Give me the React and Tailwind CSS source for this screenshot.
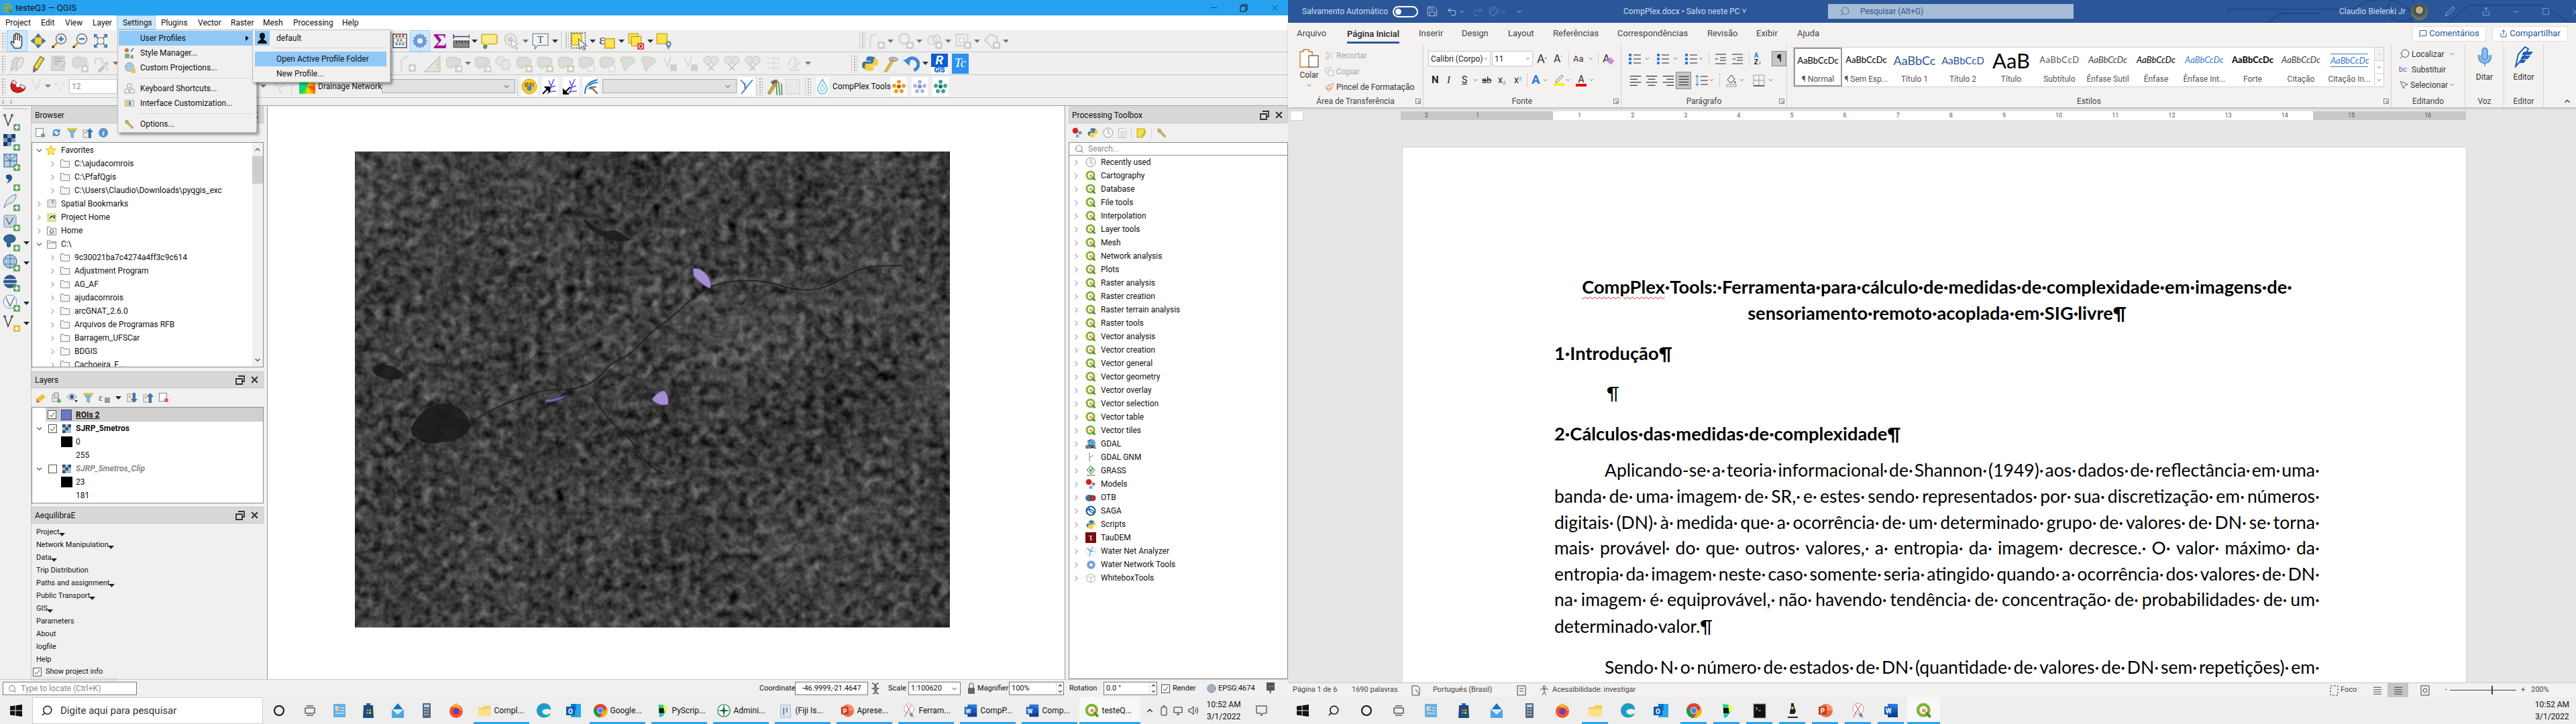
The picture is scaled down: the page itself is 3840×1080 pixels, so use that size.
import { Search, Scissors, Copy, Paintbrush, Mic, MessageSquare, Share, ChevronDown, ChevronRight, ChevronUp, Undo2, Redo2, Save, Palette, Minus, Square, X, MousePointer2, Pen } from "lucide-react";

const Caret = ({ c = "#333" }) => (
  <svg width="9" height="5" viewBox="0 0 9 5" className="shrink-0"><path d="M0 0h9L4.5 5z" fill={c} /></svg>
);

const Handle = () => (
  <div className="w-[6px] h-[26px] mx-[2px] shrink-0 bg-[radial-gradient(#a8a8a8_1px,transparent_1.2px)] bg-[length:4px_4px]" />
);

const Sep = () => <div className="w-px h-[28px] bg-[#cfcfcf] shrink-0" />;

const Slot = ({ c = "w-[31px]", children }) => (
  <div className={c + " h-full flex items-center justify-center shrink-0"}>{children}</div>
);

const I = ({ s = 24, children }) => (
  <svg width={s} height={s} viewBox="0 0 24 24" className="shrink-0">{children}</svg>
);

// ---------- qgis toolbar icons
const Hand = () => (
  <I s={26}><path d="M8 22c-2-3-5-6-5-8s2-1 4 1V5c0-2 2-2 2 0v6V3c0-2 3-2 3 0v8V4c0-2 3-2 3 0v8V7c0-2 3-2 3 0v9c0 3-1 4-2 6z" fill="#fff" stroke="#222" strokeWidth="1.2" /></I>
);
const PanSel = () => (
  <I>
    <rect x="7" y="7" width="10" height="10" fill="#f5d33f" stroke="#a98c10" />
    <path d="M12 1l4 5H8zM12 23l4-5H8zM1 12l5-4v8zM23 12l-5-4v8z" fill="#3a78b5" stroke="#1f4a7a" strokeWidth=".5" />
  </I>
);
const Zoom = ({ minus }) => (
  <I>
    <circle cx="15" cy="9" r="7.5" fill="#eef3f8" stroke="#777" strokeWidth="1.5" />
    <path d="M11 9h8" stroke="#3a78b5" strokeWidth="2.4" />
    {!minus && <path d="M15 5v8" stroke="#3a78b5" strokeWidth="2.4" />}
    <path d="M9.500 14.500L2 22" stroke="#d3a21b" strokeWidth="3" />
    <path d="M2 22l2-2" stroke="#222" strokeWidth="3" />
  </I>
);
const ZoomFull = () => (
  <I>
    <path d="M2 2h6L2 8zM22 2h-6l6 6zM2 22v-6l6 6zM22 22h-6l6-6z" fill="#3a78b5" />
    <path d="M5 5l14 14M19 5L5 19" stroke="#3a78b5" strokeWidth="2" />
    <circle cx="12" cy="12" r="5" fill="#eef3f8" stroke="#777" />
  </I>
);
const Abacus = () => (
  <I>
    <rect x="2" y="2" width="20" height="20" fill="#fff" stroke="#444" strokeWidth="1.4" />
    <path d="M2 8h20M2 14h20" stroke="#888" />
    <circle cx="7" cy="5" r="1.800" fill="#c23b3b" /><circle cx="12" cy="5" r="1.800" fill="#c23b3b" /><circle cx="17" cy="5" r="1.800" fill="#c23b3b" />
    <circle cx="9" cy="11" r="1.800" fill="#58a45c" /><circle cx="14" cy="11" r="1.800" fill="#58a45c" />
    <circle cx="7" cy="17" r="1.800" fill="#4c7fc0" /><circle cx="12" cy="17" r="1.800" fill="#4c7fc0" /><circle cx="17" cy="17" r="1.800" fill="#4c7fc0" />
  </I>
);
const Gear = ({ c = "#6f9bd8", s = 24 }) => (
  <I s={s}>
    <path d="M12 1l2 3 3-1.500.8 3.500 3.500.7L20 10l3 2-3 2 1.300 3.300-3.500.7L17 21.500 14 20l-2 3-2-3-3 1.500-.8-3.500-3.500-.7L4 14l-3-2 3-2-1.300-3.300 3.500-.7L7 2.500 10 4z" fill={c} stroke="#4a74ad" strokeWidth=".5" />
    <circle cx="12" cy="12" r="4" fill="#eaf1fb" />
  </I>
);
const Ruler = () => (
  <I s={26}>
    <path d="M2 6h22M2 3v6M24 3v6" stroke="#2d4a6c" strokeWidth="1.5" />
    <rect x="2" y="12" width="22" height="9" fill="#8a8a8a" stroke="#444" />
    <path d="M6 12v4M10 12v3M14 12v4M18 12v3M22 12v4" stroke="#222" />
  </I>
);
const CalloutIco = () => (
  <I s={25}>
    <path d="M3 2h18c2 0 2 1 2 3v8c0 2-1 3-3 3H10l-3 4-1-4H3c-2 0-2-1-2-3V5c0-2 0-3 2-3z" fill="#fbeb8e" stroke="#c7a21a" strokeWidth="1.3" />
    <circle cx="6" cy="20" r="3" fill="#5d8f5d" />
  </I>
);
const GearPointer = () => (
  <I s={26}>
    <circle cx="11" cy="10" r="8" fill="#e8e8e8" stroke="#c8c8c8" strokeWidth="2" strokeDasharray="3 1.500" />
    <circle cx="11" cy="10" r="3.500" fill="#cfcfcf" />
    <path d="M12 11l10 5-4 1.500 3 5-2 1-3-5-3 3z" fill="#f4f4f4" stroke="#b5b5b5" />
  </I>
);
const TCall = () => (
  <I s={26}>
    <path d="M2 2h21v16H9l-4 5v-5H2z" fill="#eef3f5" stroke="#6a7a84" />
    <text x="12.500" y="14.500" textAnchor="middle" fontSize="13" fontFamily="Liberation Serif, serif" fill="#444">T</text>
  </I>
);
const SelectY = () => (
  <I s={27}>
    <rect x="1" y="1" width="19" height="20" fill="none" stroke="#444" strokeDasharray="2 1.500" />
    <rect x="2" y="2" width="13" height="15" fill="#fde54b" stroke="#b99a12" />
    <path d="M11 9l11 9-5 .5 3 5-2 1-3-5-3 3z" fill="#eee" stroke="#666" />
  </I>
);
const Eps = () => (
  <I s={26}>
    <rect x="9" y="9" width="13" height="13" fill="#fde54b" stroke="#b99a12" strokeWidth="1.2" />
    <text x="1" y="17" fontSize="20" fontFamily="Liberation Serif, serif" fill="#6b3a83">ε</text>
  </I>
);
const StackY = () => (
  <I s={26}>
    <rect x="2" y="2" width="13" height="13" fill="#fde54b" stroke="#b99a12" />
    <rect x="6" y="6" width="13" height="13" fill="#fde54b" stroke="#b99a12" />
    <rect x="14" y="15" width="9" height="9" rx="1" fill="#dc2b2b" />
    <circle cx="18.500" cy="19.500" r="2.600" fill="none" stroke="#fff" />
  </I>
);
const PinY = () => (
  <I s={26}>
    <rect x="2" y="2" width="14" height="14" fill="#fde54b" stroke="#b99a12" />
    <path d="M18 24c-3-5-4-6-4-8a4 4 0 018 0c0 2-1 3-4 8z" fill="#7791a8" />
    <circle cx="18" cy="16" r="1.500" fill="#fff" />
  </I>
);
const Badge = ({ x = 14, y = 14, c = "#d2cfc2", g = "#fff" }) => (
  <>
    <rect x={x} y={y} width="10" height="10" rx="1" fill={c} />
    <circle cx={x + 5} cy={y + 5} r="2.500" fill={g} />
  </>
);
const GreyA = () => (
  <I s={26}><path d="M3 22V10c0-5 4-7 8-7" fill="none" stroke="#cfcfcf" strokeWidth="1.500" /><rect x="9" y="1" width="3" height="3" fill="#ddd" /><rect x="2" y="19" width="3" height="3" fill="#ddd" /><Badge x={13} y={13} /></I>
);
const GreyB = () => (
  <I s={26}><circle cx="10" cy="9" r="7" fill="none" stroke="#cfcfcf" strokeWidth="2" /><Badge x={13} y={13} /></I>
);
const GreyC = () => (
  <I s={26}><circle cx="9" cy="11" r="6" fill="#ececec" stroke="#cfcfcf" strokeWidth="1.500" /><circle cx="15" cy="9" r="5" fill="none" stroke="#cfcfcf" strokeWidth="1.500" /><Badge x={13} y={13} /></I>
);
const GreyD = () => (
  <I s={26}><rect x="2" y="3" width="16" height="16" fill="#ececec" stroke="#cfcfcf" strokeWidth="1.500" /><rect x="7" y="8" width="6" height="6" fill="#f4f4f4" stroke="#cfcfcf" /><Badge x={13} y={13} /></I>
);
const GreyE = () => (
  <I s={26}><path d="M2 11l7-8 9 3 1 9-8 5z" fill="none" stroke="#cfcfcf" strokeWidth="2" /><Badge x={13} y={13} /></I>
);
const Blob = ({ b = "#d2cfc2", k = "d" }) => (
  <I s={26}>
    <path d="M2 9c0-5 4-7 10-6 6 0 10 1 10 6 0 5-5 5-8 6-2 1-3 4-7 3-4-1-5-5-5-9z" fill="#dcdcd6" stroke="#c9c9c2" />
    {k === "d" && <Badge x={14} y={14} c={b} />}
    {k === "x" && <><rect x="14" y="14" width="10" height="10" rx="1" fill="#e3e0dc" /><path d="M16.500 16.500l5 5m0-5l-5 5" stroke="#fff" strokeWidth="1.600" /></>}
    {k === "a" && <><rect x="14" y="14" width="10" height="10" rx="1" fill="#cfcfcf" /><path d="M16 19h6M19 16l3 3-3 3" stroke="#fff" strokeWidth="1.500" fill="none" /></>}
  </I>
);
const GreyPencil = () => (
  <I s={26}><path d="M3 22L5 8l5-5 4 2-1 10z" fill="#d8d8d8" stroke="#bcbcbc" /><path d="M10 22L12 8l5-5 4 2-3 10z" fill="#e6e6e6" stroke="#bcbcbc" /></I>
);
const YPencil = () => (
  <I s={26}><path d="M5 24l1-8L15 2l5 3-9 15z" fill="#f4d33b" stroke="#555" /><path d="M5 24l1-8 5 4z" fill="#777" /></I>
);
const SaveGrey = () => (
  <I s={25}><rect x="2" y="2" width="18" height="20" fill="#dadada" stroke="#bbb" /><path d="M5 5h12M5 9h12M5 13h7" stroke="#aaa" strokeWidth="1.500" /><path d="M13 22l2-6 6-6 2 2-6 6z" fill="#c8c8c8" /></I>
);
const ToolsGrey = () => (
  <I s={26}><path d="M3 5h10M3 5v8M13 5v4" stroke="#cfcfcf" strokeWidth="1.500" fill="none" /><path d="M6 22l12-13 3 3-12 13z" fill="#c5c5c0" /><path d="M19 22L9 9l3-2 10 13z" fill="#ddd" /></I>
);
const TriRuler = () => (
  <I s={26}><path d="M22 2v21H1z" fill="#e7e3da" stroke="#bdb7a8" /><path d="M20 9h-3M20 13h-3M20 17h-3" stroke="#bdb7a8" /></I>
);
const Magnet = () => (
  <I s={27}>
    <path d="M6 4c-5 6-4 14 3 16s13-3 13-7l-6-3c0 3-3 5-5 4s-3-3-1-7z" fill="#d61f1f" stroke="#871010" />
    <path d="M6 4l4 3-1 3-5-2zM22 13l-6-3-1 3 5 3z" fill="#eee" stroke="#777" strokeWidth=".5" />
  </I>
);
const Python = ({ s = 24 }) => (
  <I s={s}>
    <path d="M12 2c-5 0-5 2-5 3v3h6v1H5C2 9 1 11 1 14c0 4 2 5 4 5h2v-3c0-2 2-4 4-4h5c2 0 3-1 3-3V5c0-2-2-3-7-3z" fill="#3a76ab" />
    <path d="M12 22c5 0 5-2 5-3v-3h-6v-1h8c3 0 4-2 4-5 0-4-2-5-4-5h-2v3c0 2-2 4-4 4H8c-2 0-3 1-3 3v4c0 2 2 3 7 3z" fill="#f7ce3e" />
  </I>
);
const Hammer = () => (
  <I s={26}>
    <path d="M3 24l12-19 3 2L6 25z" fill="#e8ba2c" stroke="#96781a" strokeWidth=".6" />
    <path d="M10 5c4-3 8-3 13 1l-3 3-7-2-1 2z" fill="#bbb" stroke="#666" strokeWidth=".6" />
    <path d="M3 24c5 1 12 0 20-1" stroke="#ddd" strokeWidth="1.500" fill="none" />
  </I>
);
const UndoBlue = () => (
  <I s={26}>
    <path d="M6 9a8.500 8.500 0 1110 12" fill="none" stroke="#3a88d8" strokeWidth="4.500" />
    <path d="M1 7l10-2-1 10z" fill="#3a88d8" />
  </I>
);
const RGis = () => (
  <div className="w-[25px] h-[30px] bg-[#fff] flex flex-col items-center overflow-hidden">
    <span className="w-full h-[20px] bg-[#0a5ecf] text-white text-[19px] leading-[20px] text-center font-bold italic">R</span>
    <span className="text-[#0a5ecf] text-[10px] leading-[10px] font-black">GIS</span>
  </div>
);
const Tc = () => (
  <div className="w-[25px] h-[30px] bg-[#2c92f0] text-white flex items-center justify-center text-[19px] italic [font-family:'Liberation_Serif',serif]">Tc</div>
);
const Plugin = ({ children }) => (
  <div className="w-[24px] h-[28px] bg-white flex items-center justify-center shrink-0">{children}</div>
);
const Barcode = () => (
  <I><circle cx="12" cy="12" r="11" fill="#fbc92c" stroke="#d19a12" /><path d="M6 6v7M8 6v7M10 6v7M13 6v7M15 6v7M18 6v7" stroke="#444" strokeWidth="1" /><circle cx="12" cy="15" r="3.500" fill="#3a88d8" /></I>
);
const Branch = ({ dir = "up" }) => (
  <I>
    <path d="M8 23c4-3 5-8 6-13l4-9M11 14l9-3M13 11L10 3M9 20l12-1" fill="none" stroke="#5a5ae0" strokeWidth="1.600" />
    {dir === "up" && <path d="M1 23l8-8M5 13h6v6z" stroke="#000" strokeWidth="2" fill="#000" />}
    {dir === "down" && <path d="M11 13l-8 8M1 17v6h6z" stroke="#000" strokeWidth="2" fill="#000" />}
  </I>
);
const RiverHammer = () => (
  <I><path d="M3 23C3 10 10 4 22 2M9 11c4-4 8-5 13-5M8 15c4-2 8-3 12-2" stroke="#2a7bb5" strokeWidth="2" fill="none" /><path d="M14 15l8 8M11 16l5-3" stroke="#9a7a55" strokeWidth="2.500" /></I>
);
const Tee = () => (
  <I><path d="M3 2l6 7 1 7-6 7M21 2l-6 7-5 7" stroke="#2a86cf" strokeWidth="1.800" fill="none" /><path d="M10 6v11" stroke="#d33" strokeDasharray="2 1" /></I>
);
const HammerGreen = () => (
  <I s={26}>
    <path d="M14 4c2 6 1 14 2 20M18 6c1 6 1 12 2 18M22 8c1 6 0 12 1 16" stroke="#4e8f4e" strokeWidth="1.500" fill="none" />
    <path d="M3 21L13 6l3 2L6 23z" fill="#cfb42a" stroke="#333" strokeWidth=".5" /><path d="M7 5l8-3 3 4-8 4z" fill="#7a6a5a" />
  </I>
);
const MapGrey = () => (
  <I s={26}><path d="M3 2h14l4 2v18H5l-2-2z" fill="#ececec" stroke="#cfcfcf" /><path d="M8 6v13M12 8l2 12M17 6v13" stroke="#d5d5d5" strokeDasharray="2 1" /></I>
);
const Drop = () => (
  <div className="w-[18px] h-[28px] bg-white flex items-center justify-center">
    <svg width="16" height="24" viewBox="0 0 16 24"><path d="M8 1c2 6 7 10 7 15a7 7 0 01-14 0C1 11 6 7 8 1z" fill="none" stroke="#5ab8e8" strokeWidth="1.400" /><path d="M8 8c1 3 3 5 3 8a3 3 0 01-6 0c0-3 2-5 3-8z" fill="none" stroke="#5ab8e8" /></svg>
  </div>
);
const Flower = ({ c, d }) => (
  <Plugin>
    <svg width="22" height="22" viewBox="0 0 22 22">
      <circle cx="11" cy="4" r="3" fill={c} /><circle cx="4" cy="10" r="3" fill={c} /><circle cx="18" cy="10" r="3" fill={c} /><circle cx="7" cy="18" r="3" fill={c} /><circle cx="15" cy="18" r="3" fill={c} /><circle cx="11" cy="11" r="3" fill={d} />
    </svg>
  </Plugin>
);
const Heat = () => (
  <div className="w-[24px] h-[22px] bg-[conic-gradient(from_45deg,#ffe600,#ff3d00,#ffe600,#19d84a,#00e0a8,#19d84a,#ffe600)]" />
);
const Combo = ({ c }) => (
  <div className={c + " h-[21px] bg-[#e1e1e1] border border-[#adadad] flex items-center justify-end pr-[6px] shrink-0"}>
    <ChevronDown size={12} color="#333" />
  </div>
);
const Q = ({ s = 16 }) => (
  <svg width={s} height={s} viewBox="0 0 16 16" className="shrink-0">
    <circle cx="7.500" cy="7.500" r="5.500" fill="none" stroke="#83b23c" strokeWidth="3" />
    <path d="M10 10l4.500 4.500" stroke="#5c8a2a" strokeWidth="2.600" />
    <circle cx="8" cy="8" r="2" fill="#f29a38" />
  </svg>
);

const Panel = ({ title }) => (
  <div className="h-[25px] bg-[#d8d8d8] border border-[#c4c4c4] flex items-center pl-[4px] pr-[5px] text-[12px] shrink-0">
    <span className="flex-1">{title}</span>
    <svg width="14" height="14" viewBox="0 0 14 14" className="mr-[7px]"><path d="M4 1h9v8h-3M1 5h9v8H1z" fill="none" stroke="#333" strokeWidth="1.800" /></svg>
    <X size={15} strokeWidth={3.4} color="#333" />
  </div>
);

const FolderIco = () => (
  <svg width="14" height="12" viewBox="0 0 14 12" className="shrink-0"><path d="M.5 11.500V.5h4l1 2h8v9z" fill="#f6f6f6" stroke="#8a8a8a" /></svg>
);

const leftIcons = [
  <path key="a" d="M3 3l5 15 6-15" fill="none" stroke="#333" strokeWidth="1.300" />,
  <g key="b"><rect x="1" y="1" width="6" height="6" fill="#243a58" /><rect x="7" y="1" width="6" height="6" fill="#6fa0d0" /><rect x="13" y="1" width="6" height="6" fill="#243a58" /><rect x="1" y="7" width="6" height="6" fill="#6fa0d0" /><rect x="7" y="7" width="6" height="6" fill="#243a58" /><rect x="13" y="7" width="6" height="6" fill="#6fa0d0" /><rect x="1" y="13" width="6" height="6" fill="#243a58" /><rect x="7" y="13" width="6" height="6" fill="#6fa0d0" /></g>,
  <g key="c"><rect x="2" y="1" width="19" height="19" fill="#b7d1ea" stroke="#2e5d8c" /><path d="M2 11h19M11 1v19M2 1l9 10M21 1l-10 10" stroke="#2e5d8c" /></g>,
  <path key="d" d="M6 2c5-2 9 1 8 5-1 4-5 6-8 8 1-3 3-4 3-6-3 1-6-6-3-7z" fill="#1e5a8a" />,
  <path key="e" d="M2 21C4 10 10 3 20 1c0 8-5 13-12 14z" fill="#dfe7ee" stroke="#587a99" />,
  <g key="f"><rect x="2" y="2" width="18" height="18" rx="2" fill="#c7d5e2" stroke="#8098ad" /><path d="M5 5l5 11 6-11" fill="none" stroke="#333" /></g>,
  <path key="g" d="M3 4c4-4 12-4 15 0 3 5-2 10-6 8l-1 7h-4l-1-7C3 12 0 8 3 4z" fill="#33689a" stroke="#1a3f66" />,
  <g key="h"><circle cx="11" cy="11" r="10" fill="#aac6e2" stroke="#2e5d8c" /><path d="M3 7h16M3 15h16M11 1v20" stroke="#2e5d8c" strokeDasharray="2 1" /></g>,
  <g key="i"><circle cx="11" cy="11" r="10" fill="#2e5d8c" /><path d="M1 8h20M1 14h20" stroke="#dfe8f2" strokeWidth="1.500" /></g>,
  <g key="j"><circle cx="11" cy="11" r="10" fill="#eef4fa" stroke="#6f93ba" /><path d="M5 5l6 13 6-13" fill="none" stroke="#333" /></g>,
  <path key="k" d="M3 3l5 15 6-15" fill="none" stroke="#333" strokeWidth="1.300" />,
];

const LeftStrip = () => (
  <div className="w-[47px] shrink-0 flex flex-col items-start pl-[4px] pt-[2px] border-r border-[#c8c8c8] h-full">
    <div className="w-[38px] h-[4px] bg-[radial-gradient(#b0b0b0_1px,transparent_1.2px)] bg-[length:4px_4px] mb-[3px]" />
    {leftIcons.map((ic, n) => (
      <div key={n} className="h-[30px] flex items-center gap-[5px] shrink-0">
        <svg width="26" height="26" viewBox="0 0 26 26" className="shrink-0">
          {ic}
          {n === 0 || n === 10 ? <><circle cx="3" cy="3" r="1.500" fill="none" stroke="#333" /><circle cx="14" cy="3" r="1.500" fill="none" stroke="#333" /></> : null}
          <rect x="16" y="16" width="10" height="10" rx="1.500" fill={n === 10 ? "#e0c040" : "#69a96b"} />
          {n === 10 ? <circle cx="21" cy="21" r="2.500" fill="#fff" /> : <path d="M18 21h6M21 18v6" stroke="#fff" strokeWidth="2" />}
        </svg>
        {[6, 7, 9, 10].includes(n) && <Caret c="#222" />}
      </div>
    ))}
  </div>
);

const browserRows = [
  [0, "Favorites", "star", true],
  [1, "C:\\ajudacomrois"],
  [1, "C:\\PfafQgis"],
  [1, "C:\\Users\\Claudio\\Downloads\\pyqgis_exc"],
  [0, "Spatial Bookmarks", "book"],
  [0, "Project Home", "home2"],
  [0, "Home", "home"],
  [0, "C:\\", "drive", true],
  [1, "9c30021ba7c4274a4ff3c9c614"],
  [1, "Adjustment Program"],
  [1, "AG_AF"],
  [1, "ajudacomrois"],
  [1, "arcGNAT_2.6.0"],
  [1, "Arquivos de Programas RFB"],
  [1, "Barragem_UFSCar"],
  [1, "BDGIS"],
  [1, "Cachoeira_E..."],
];

const TopIco = ({ k }) => {
  if (k === "star") return <svg width="16" height="16" viewBox="0 0 24 24" className="shrink-0"><path d="M12 1l3.500 7.500 8 1-6 5.500 1.600 8L12 19l-7.100 4 1.600-8-6-5.500 8-1z" fill="#fde54b" stroke="#c9a514" /></svg>;
  if (k === "book") return <svg width="14" height="14" viewBox="0 0 14 14" className="shrink-0"><path d="M1 1h12v11H1z" fill="#e5e5e5" stroke="#a0a0a0" /><path d="M7 1h3v6L8.500 6 7 7z" fill="#8ea7c4" /></svg>;
  if (k === "home2") return <svg width="14" height="13" viewBox="0 0 14 13" className="shrink-0"><rect width="14" height="13" fill="#d4e39a" /><path d="M0 9l8-7 6 1M7 11l2-8" stroke="#f6f6c8" strokeWidth="1.500" /><path d="M10 3l3 3-2 2-3-2z" fill="#1f9a35" /></svg>;
  if (k === "home") return <svg width="14" height="13" viewBox="0 0 14 13" className="shrink-0"><path d="M.5 12.500V.5h4l1 2h8v10z" fill="#f8f8f8" stroke="#8a8a8a" /><path d="M7 4l3 3H9v3H5V7H4z" fill="none" stroke="#444" /></svg>;
  if (k === "drive") return <svg width="14" height="13" viewBox="0 0 14 13" className="shrink-0"><path d="M.5 12.500V.5h4l1 2h8v10zM.5 4.500h13" fill="#f8f8f8" stroke="#8a8a8a" /></svg>;
  return <FolderIco />;
};

const Browser = () => (
  <div className="h-[389px] flex flex-col shrink-0">
    <Panel title="Browser" />
    <div className="h-[28px] flex items-center gap-[8px] pl-[6px] shrink-0">
      <svg width="15" height="15" viewBox="0 0 15 15"><rect x=".5" y=".5" width="11" height="12" fill="#fff" stroke="#888" /><circle cx="11" cy="11" r="3" fill="#69a96b" /></svg>
      <svg width="16" height="16" viewBox="0 0 24 24"><path d="M4 12a8 8 0 0113-6l3-3v8h-8l3-3a5 5 0 00-8 4zM20 12a8 8 0 01-13 6l-3 3v-8h8l-3 3a5 5 0 008-4z" fill="#3f86cb" /></svg>
      <svg width="15" height="15" viewBox="0 0 15 15"><path d="M0 1h15L9.500 8v7l-4-2V8z" fill="#7eb6d8" stroke="#5c8aa8" strokeWidth=".5" /><rect width="15" height="3" fill="#e8c73a" /></svg>
      <svg width="16" height="15" viewBox="0 0 16 15"><rect x="1" y="3" width="8" height="11" fill="#eee" stroke="#999" /><rect x="3" y="6" width="3" height="2" fill="#e29b35" /><path d="M11 0l5 6h-3v9H9V6H6z" fill="#3a78b5" /></svg>
      <svg width="14" height="14" viewBox="0 0 14 14"><circle cx="7" cy="7" r="7" fill="#5b93cc" /><text x="7" y="11" textAnchor="middle" fontSize="11" fontStyle="italic" fontWeight="bold" fill="#fff" fontFamily="Liberation Serif, serif">i</text></svg>
    </div>
    <div className="flex-1 bg-white border border-[#8c8c8c] flex overflow-hidden">
      <div className="flex-1 pt-[1px] overflow-hidden">
        {browserRows.map(([lvl, t, ic, open]) => (
          <div key={t} className={"h-[20px] flex items-center text-[12px] whitespace-nowrap shrink-0 " + (lvl ? "pl-[24px]" : "pl-[4px]")}>
            {open ? <ChevronDown size={13} strokeWidth={2.4} color="#555" className="shrink-0" /> : <ChevronRight size={13} strokeWidth={2.4} color="#b0b0b0" className="shrink-0" />}
            <span className="w-[19px] flex justify-end mr-[7px] shrink-0"><TopIco k={ic} /></span>
            <span>{t}</span>
          </div>
        ))}
      </div>
      <div className="w-[16px] bg-[#f0f0f0] flex flex-col items-center shrink-0">
        <ChevronUp size={12} strokeWidth={2.4} color="#555" className="my-[4px]" />
        <div className="w-full h-[41px] bg-[#cdcdcd]" />
        <div className="flex-1" />
        <ChevronDown size={12} strokeWidth={2.4} color="#555" className="my-[4px]" />
      </div>
    </div>
  </div>
);

const RasterIco = () => (
  <svg width="13" height="13" viewBox="0 0 3 3" className="shrink-0"><rect width="3" height="3" fill="#9cc0de" /><rect width="1" height="1" fill="#2c4a6e" /><rect x="2" width="1" height="1" fill="#2c4a6e" /><rect x="1" y="1" width="1" height="1" fill="#2c4a6e" /><rect y="2" width="1" height="1" fill="#2c4a6e" /></svg>
);
const Chk = ({ on, c = "" }) => (
  <div className={"w-[13px] h-[13px] bg-white border border-[#555] flex items-center justify-center shrink-0 " + c}>
    {on && <svg width="11" height="11" viewBox="0 0 11 11"><path d="M2 6l2.500 2.500L9 2.500" fill="none" stroke="#333" /></svg>}
  </div>
);

const LegendItem = ({ t, black }) => (
  <div className="h-[20px] flex items-center text-[12px] pl-[43px] shrink-0">
    <div className={"w-[17px] h-[16px] mr-[5px] " + (black ? "bg-black" : "")} />
    {t}
  </div>
);

const Layers = () => (
  <div className="h-[197px] mt-[6px] flex flex-col shrink-0">
    <Panel title="Layers" />
    <div className="h-[28px] flex items-center gap-[8px] pl-[6px] shrink-0">
      <svg width="16" height="15" viewBox="0 0 16 15"><path d="M1 9l9-7 5 4-9 8z" fill="#f0c23a" /><path d="M1 9l5 5-4 1z" fill="#d8513a" /></svg>
      <svg width="14" height="16" viewBox="0 0 14 16"><rect x="1" y="4" width="9" height="10" fill="#eee" stroke="#888" /><rect x="4" y="1" width="6" height="8" fill="#ddd" stroke="#888" /><circle cx="11" cy="13" r="3" fill="#69a96b" /></svg>
      <svg width="17" height="14" viewBox="0 0 17 14"><path d="M1 6c4-6 10-6 14 0-4 6-10 6-14 0z" fill="#dfe6ec" stroke="#888" /><circle cx="8" cy="6" r="3" fill="#3a5f85" /><path d="M12 11h5l-2.500 3z" fill="#222" /></svg>
      <svg width="15" height="15" viewBox="0 0 15 15"><path d="M0 1h15L9.500 8v7l-4-2V8z" fill="#7eb6d8" stroke="#5c8aa8" strokeWidth=".5" /><rect width="15" height="3" fill="#e8c73a" /></svg>
      <span className="text-[#6b3a83] text-[15px] leading-none [font-family:'Liberation_Serif',serif]">ε</span>
      <div className="-ml-[5px] w-[8px] h-[8px] bg-[#999] mt-[8px]" />
      <Caret c="#222" />
      <svg width="16" height="15" viewBox="0 0 16 15"><rect x="1" y="2" width="8" height="11" fill="#eee" stroke="#999" /><rect x="3" y="5" width="3" height="2" fill="#e29b35" /><path d="M11 15l5-6h-3V0H9v9H6z" fill="#3a78b5" /></svg>
      <svg width="16" height="15" viewBox="0 0 16 15"><rect x="1" y="3" width="8" height="11" fill="#eee" stroke="#999" /><rect x="3" y="6" width="3" height="2" fill="#e29b35" /><path d="M11 0l5 6h-3v9H9V6H6z" fill="#3a78b5" /></svg>
      <svg width="15" height="15" viewBox="0 0 15 15"><rect x=".5" y=".5" width="11" height="12" fill="#fff" stroke="#888" /><circle cx="11" cy="11" r="3" fill="#e06060" /></svg>
    </div>
    <div className="flex-1 bg-white border border-[#8c8c8c] overflow-hidden">
      <div className="h-[21px] ml-[20px] bg-[#d0d0d0] flex items-center pl-[3px] text-[12px] font-bold underline">
        <Chk on c="mr-[7px]" />
        <span className="w-[16px] h-[16px] bg-[#6a78c0] border border-[#3a4688] mr-[6px]" />
        ROIs 2
      </div>
      <div className="h-[20px] flex items-center text-[12px] font-bold pl-[4px]">
        <ChevronDown size={13} strokeWidth={2.4} color="#555" className="mr-[7px]" />
        <Chk on c="mr-[8px]" />
        <RasterIco />
        <span className="ml-[7px]">SJRP_5metros</span>
      </div>
      <LegendItem t="0" black />
      <LegendItem t="255" />
      <div className="h-[20px] flex items-center text-[12px] italic font-bold text-[#8a8a8a] pl-[4px]">
        <ChevronDown size={13} strokeWidth={2.4} color="#555" className="mr-[7px]" />
        <Chk c="mr-[8px]" />
        <RasterIco />
        <span className="ml-[7px]">SJRP_5metros_Clip</span>
      </div>
      <LegendItem t="23" black />
      <LegendItem t="181" />
    </div>
  </div>
);

const aequi = [
  ["Project", 1], ["Network Manipulation", 1], ["Data", 1], ["Trip Distribution"], ["Paths and assignment", 1],
  ["Public Transport", 1], ["GIS", 1], ["Parameters"], ["About"], ["logfile"], ["Help"],
];

const Aequilibrae = () => (
  <div className="flex-1 mt-[5px] flex flex-col">
    <Panel title="AequilibraE" />
    <div className="pl-[7px] pt-[4px]">
      {aequi.map(([t, m]) => (
        <div key={t} className="h-[19px] flex items-center text-[11px] text-[#111]">
          {t}
          {m && <span className="mt-[5px] -ml-[1px]"><Caret c="#222" /></span>}
        </div>
      ))}
    </div>
    <div className="pl-[2px] flex items-center text-[11px] h-[16px] gap-[6px]">
      <Chk on />
      Show project info
    </div>
    <div className="ml-[2px] mt-[1px] w-[125px] h-[4px] bg-[#f8f8f8] border border-[#d4d4d4]" />
  </div>
);

const toolbox = [
  "Cartography", "Database", "File tools", "Interpolation", "Layer tools", "Mesh", "Network analysis", "Plots", "Raster analysis",
  "Raster creation", "Raster terrain analysis", "Raster tools", "Vector analysis", "Vector creation", "Vector general", "Vector geometry",
  "Vector overlay", "Vector selection", "Vector table", "Vector tiles",
];

const TreeRow = ({ icon, t }) => (
  <div className="h-[20px] flex items-center text-[12px] pl-[4px] shrink-0">
    <ChevronRight size={13} strokeWidth={2.4} color="#b0b0b0" className="shrink-0" />
    <span className="w-[16px] ml-[7px] mr-[7px] flex justify-center shrink-0">{icon}</span>
    {t}
  </div>
);

const Clock = ({ s = 16 }) => (
  <svg width={s} height={s} viewBox="0 0 16 16" className="shrink-0"><circle cx="8" cy="8" r="7" fill="#f7f7f7" stroke="#9a9a9a" /><path d="M8 3v5l3 3" stroke="#888" fill="none" /></svg>
);
const Models = () => (
  <svg width="16" height="16" viewBox="0 0 16 16" className="shrink-0"><circle cx="5" cy="5" r="4" fill="#d02020" stroke="#d02020" strokeDasharray="1.500 1" /><circle cx="12" cy="8" r="2.500" fill="#8a8a8a" /><circle cx="8" cy="13" r="2.500" fill="#8aa8d8" /></svg>
);

const Toolbox = () => (
  <div className="flex-1 flex flex-col min-w-0 mt-[1px]">
    <Panel title="Processing Toolbox" />
    <div className="h-[28px] flex items-center pl-[5px] gap-[7px] shrink-0">
      <Models />
      <Python s={16} />
      <Clock />
      <svg width="12" height="15" viewBox="0 0 12 15"><path d="M.5.5h8l3 3v11H.5z" fill="#f4f4f4" stroke="#bbb" /><path d="M3 6h6M3 9h6M3 12h6" stroke="#bbb" /></svg>
      <div className="w-px h-[16px] bg-[#cfcfcf]" />
      <svg width="15" height="15" viewBox="0 0 15 15"><path d="M1 1h12v8l-4 5H1z" fill="#f1df47" stroke="#c2aa1e" /><path d="M14 4L8 13" stroke="#777" /></svg>
      <div className="w-px h-[16px] bg-[#cfcfcf]" />
      <svg width="16" height="16" viewBox="0 0 16 16"><path d="M2 2l4 1 1 3 7 7-2 2-7-7-3-1z" fill="#d3b143" stroke="#777" strokeWidth=".5" /></svg>
    </div>
    <div className="h-[20px] bg-white border border-[#8c8c8c] flex items-center pl-[8px] gap-[6px] text-[12px] text-[#8a8a8a] shrink-0">
      <Search size={14} color="#888" />
      Search...
    </div>
    <div className="flex-1 bg-white border border-[#8c8c8c] border-t-0 flex flex-col overflow-hidden">
      <TreeRow icon={<Clock />} t="Recently used" />
      {toolbox.map((t) => <TreeRow key={t} icon={<Q />} t={t} />)}
      <TreeRow t="GDAL" icon={<svg width="16" height="16" viewBox="0 0 16 16"><circle cx="9" cy="7" r="6" fill="#5ea6c8" /><path d="M3 4l5-2" stroke="#333" /><text x="0" y="15" fontSize="6.500" fontWeight="bold" fill="#000">GDAL</text></svg>} />
      <TreeRow t="GDAL GNM" icon={<svg width="14" height="16" viewBox="0 0 14 16"><path d="M5 1v14M5 9l6-4" stroke="#aaa" strokeWidth="1.500" fill="none" /></svg>} />
      <TreeRow t="GRASS" icon={<svg width="16" height="16" viewBox="0 0 16 16"><path d="M8 1l6 6-6 6-6-6z" fill="#e8f3df" stroke="#555" /><path d="M6 6l2 3 3-5" stroke="#2f9a3f" strokeWidth="1.500" fill="none" /><path d="M2 15h12" stroke="#555" /></svg>} />
      <TreeRow t="Models" icon={<Models />} />
      <TreeRow t="OTB" icon={<svg width="16" height="14" viewBox="0 0 16 14"><ellipse cx="6" cy="8" rx="6" ry="5" fill="#4d6f95" /><circle cx="11" cy="8" r="4" fill="#c93030" stroke="#333" /></svg>} />
      <TreeRow t="SAGA" icon={<svg width="16" height="16" viewBox="0 0 16 16"><circle cx="8" cy="8" r="6.500" fill="none" stroke="#1f5fa8" strokeWidth="2.200" /><path d="M2 8c4-4 8-3 12 3M5 3c0 5 4 9 9 8" stroke="#1f5fa8" strokeWidth="1.600" fill="none" /></svg>} />
      <TreeRow t="Scripts" icon={<Python s={15} />} />
      <TreeRow t="TauDEM" icon={<div className="w-[16px] h-[16px] bg-[#7a0c0c] text-white text-[14px] leading-[15px] text-center [font-family:'Liberation_Serif',serif]">τ</div>} />
      <TreeRow t="Water Net Analyzer" icon={<svg width="16" height="16" viewBox="0 0 16 16"><circle cx="8" cy="8" r="7.500" fill="#fff" stroke="#ddd" /><path d="M6 15l2-8 3-5M7 8L3 4M8 8l5 1" stroke="#3d8fd4" strokeWidth="1.100" fill="none" /></svg>} />
      <TreeRow t="Water Network Tools" icon={<Gear s={15} />} />
      <TreeRow t="WhiteboxTools" icon={<svg width="14" height="15" viewBox="0 0 14 15"><path d="M7 1l6 3v7l-6 3-6-3V4zM1 4l6 3 6-3M7 7v7" fill="none" stroke="#b0b0b0" /></svg>} />
    </div>
  </div>
);

// the raster in the canvas is a drawing, so texture comes from an svg filter
const opaque = "0.33 0.33 0.33 0 0 0.33 0.33 0.33 0 0 0.33 0.33 0.33 0 0 0 0 0 0 1";
const MapRaster = () => (
  <svg viewBox="0 0 887 710" width="887" height="710" className="block shrink-0">
    <defs>
      <filter id="sat" x="0" y="0" width="100%" height="100%" colorInterpolationFilters="sRGB">
        <feTurbulence type="fractalNoise" baseFrequency="0.07" numOctaves="6" seed="11" />
        <feColorMatrix type="matrix" values={opaque} result="fine" />
        <feTurbulence type="fractalNoise" baseFrequency="0.006" numOctaves="3" seed="4" />
        <feColorMatrix type="matrix" values={opaque} result="broad" />
        <feComposite in="fine" in2="broad" operator="arithmetic" k1="0" k2="0.85" k3="0.25" k4="-0.05" />
        <feComponentTransfer>
          <feFuncR type="linear" slope="1" intercept="-0.250" />
          <feFuncG type="linear" slope="1" intercept="-0.250" />
          <feFuncB type="linear" slope="1" intercept="-0.250" />
        </feComponentTransfer>
      </filter>
    </defs>
    <rect width="887" height="710" filter="url(#sat)" />
    <g fill="#1a1a1a" opacity=".85">
      <path d="M85 410c10-18 26-34 48-34 18 0 32 12 38 26 4 14-9 26-27 30-18 2-30 6-42 2-10-6-22-10-17-24z" />
      <path d="M30 320c15-5 30 0 40 10 5 8-8 12-22 10-12-2-28-12-18-20z" />
      <path d="M340 100c15 8 26 22 40 18s18 10 32 12c-10 8-26 4-40-2-14-4-26-14-32-28z" />
    </g>
    <g fill="none" stroke="#1c1c1c" strokeWidth="2" opacity=".8">
      <path d="M180 400c30-20 60-30 90-40s40 0 70-10 30-30 55-40 30-30 60-50 50-50 80-60 70-10 100 0 60 10 90-10 50-20 90-20" />
      <path d="M350 360c15 20 25 40 50 60s30 50 60 60" />
    </g>
    <path d="M504 175c8-3 18 4 24 14 3 6 3 12 1 15-9-4-19-12-24-19z" fill="#a48fd0" stroke="#6a4fa0" />
    <path d="M443 370c5-8 12-13 18-13 5 4 7 12 6 20-8 3-18 0-24-7z" fill="#a48fd0" stroke="#6a4fa0" />
    <path d="M284 370c10 0 22-4 32-6-6 6-20 10-32 10z" fill="#7a66a8" stroke="#4a3a78" />
  </svg>
);

const MenuRow = ({ icon, t, c = "", hl }) => (
  <div className={"h-[22px] flex items-center text-[12px] " + (hl ? "bg-[#90c8f6] " : "") + c}>
    <span className="w-[32px] flex justify-center shrink-0">{icon}</span>
    <span className="flex-1">{t}</span>
    {hl && <svg width="5" height="8" viewBox="0 0 5 8" className="mr-[6px]"><path d="M0 0l5 4-5 4z" fill="#111" /></svg>}
  </div>
);

const SettingsMenu = () => (
  <>
    <div className="absolute left-[175px] top-[44px] w-[208px] h-[154px] bg-[#f0f0f0] border border-[#bdbdbd] shadow-[3px_3px_4px_rgba(0,0,0,.4)] pt-[1px] pl-[1px] pr-[5px]">
      <MenuRow hl t="User Profiles" />
      <MenuRow t="Style Manager..." icon={<svg width="16" height="17" viewBox="0 0 16 17"><circle cx="4" cy="4" r="3" fill="#d86a3a" /><rect x="1" y="9" width="7" height="7" fill="#7fb17f" /><path d="M10 6l4-5" stroke="#3a6ea5" strokeWidth="1.500" /><text x="9" y="16" fontSize="9" fill="#333">a</text></svg>} />
      <MenuRow t="Custom Projections..." icon={<svg width="17" height="17" viewBox="0 0 17 17"><circle cx="8" cy="7" r="6.500" fill="#b0c8e0" stroke="#6f8aa6" strokeDasharray="2 1" /><path d="M11 10h6v6h-6z" fill="#e7c948" /></svg>} />
      <div className="h-px ml-[30px] bg-[#d6d6d6] my-[4px]" />
      <MenuRow t="Keyboard Shortcuts..." icon={<svg width="16" height="16" viewBox="0 0 16 16"><g fill="#f4f4f4" stroke="#999"><rect x="5" y="1" width="6" height="6" rx="1" /><rect x="1" y="9" width="6" height="6" rx="1" /><rect x="9" y="9" width="6" height="6" rx="1" /></g></svg>} />
      <MenuRow t="Interface Customization..." icon={<svg width="14" height="10" viewBox="0 0 14 10"><rect x=".5" y=".5" width="13" height="9" fill="#ddd" stroke="#aaa" /><rect x="2" y="2" width="3" height="6" fill="#f0d040" /><rect x="6" y="2" width="3" height="6" fill="#4a90c8" /></svg>} />
      <div className="h-px ml-[30px] bg-[#d6d6d6] my-[4px]" />
      <MenuRow t="Options..." icon={<svg width="16" height="16" viewBox="0 0 16 16"><path d="M2 2l4 1 1 3 7 7-2 2-7-7-3-1z" fill="#d3b143" stroke="#777" strokeWidth=".5" /></svg>} />
    </div>
    <div className="absolute left-[376px] top-[44px] w-[206px] h-[79px] bg-[#f0f0f0] border border-[#bdbdbd] shadow-[3px_3px_4px_rgba(0,0,0,.4)] pt-[1px] px-[3px] text-[12px]">
      <div className="h-[22px] flex items-center">
        <div className="w-[22px] h-[22px] bg-[#90c8f6] flex items-center justify-center mr-[10px]">
          <svg width="14" height="16" viewBox="0 0 14 16"><path d="M7 0c3 0 4 2 4 5 0 2-1 3-2 4 0 2 5 2 5 7H0c0-5 5-5 5-7-1-1-2-2-2-4 0-3 1-5 4-5z" fill="#111" /></svg>
        </div>
        default
      </div>
      <div className="h-px bg-[#d6d6d6] ml-[28px] mt-[3px] mb-[5px]" />
      <div className="h-[22px] bg-[#90c8f6] flex items-center pl-[32px] mr-[2px]">Open Active Profile Folder</div>
      <div className="h-[22px] flex items-center pl-[32px]">New Profile...</div>
    </div>
  </>
);

const menuItems = [
  ["Project", "w-[53px] pl-[8px]"], ["Edit", "w-[36px] pl-[8px]"], ["View", "w-[41px] pl-[8px]"], ["Layer", "w-[44px] pl-[8px]"],
  ["Settings", "w-[58px] pl-[8px] bg-[#cce8ff] border border-[#99d1ff] h-[21px]"], ["Plugins", "w-[55px] pl-[8px]"], ["Vector", "w-[49px] pl-[8px]"],
  ["Raster", "w-[48px] pl-[8px]"], ["Mesh", "w-[45px] pl-[8px]"], ["Processing", "w-[73px] pl-[8px]"], ["Help", "w-[50px] pl-[8px]"],
];

const Toolbars = () => (
  <div className="shrink-0 h-[114px] flex flex-col bg-[#efefef]">
    <div className="h-[34px] flex items-center border-t border-[#fafafa] border-b border-b-[#c4c4c4] shrink-0">
      <Handle />
      <Slot><div className="w-[31px] h-[32px] bg-[#cce8ff] border border-[#99d1ff] flex items-center justify-center"><Hand /></div></Slot>
      <Slot><PanSel /></Slot>
      <Slot><Zoom /></Slot>
      <Slot><Zoom minus /></Slot>
      <Slot><ZoomFull /></Slot>
      <div className="w-[415px] shrink-0" />
      <Slot><Abacus /></Slot>
      <Slot c="w-[30px]"><div className="w-[30px] h-[32px] bg-[#cce8ff] border border-[#99d1ff] flex items-center justify-center"><Gear /></div></Slot>
      <Slot c="w-[30px]"><span className="text-[#a3119a] text-[32px] font-bold leading-none [font-family:'Liberation_Serif',serif]">Σ</span></Slot>
      <Slot c="w-[32px]"><Ruler /></Slot>
      <Slot c="w-[9px]"><Caret /></Slot>
      <Slot c="w-[34px]"><CalloutIco /></Slot>
      <Slot c="w-[32px]"><GearPointer /></Slot>
      <Slot c="w-[10px]"><Caret c="#777" /></Slot>
      <Slot c="w-[33px]"><TCall /></Slot>
      <Slot c="w-[12px]"><Caret /></Slot>
      <div className="w-[7px] shrink-0 flex justify-center"><Sep /></div>
      <Handle />
      <Slot c="w-[26px]"><SelectY /></Slot>
      <Slot c="w-[14px]"><Caret /></Slot>
      <Slot c="w-[30px]"><Eps /></Slot>
      <Slot c="w-[12px]"><Caret /></Slot>
      <Slot c="w-[32px]"><StackY /></Slot>
      <Slot c="w-[11px]"><Caret /></Slot>
      <Slot c="w-[30px]"><PinY /></Slot>
      <div className="w-[276px] shrink-0" />
      <Sep />
      <Handle />
      {[<GreyA key="a" />, <GreyB key="b" />, <GreyC key="c" />, <GreyD key="d" />, <GreyE key="e" />].map((ic, n) => (
        <div key={n} className="w-[43px] h-full flex items-center pl-[2px] gap-[3px] shrink-0">{ic}<Caret c="#777" /></div>
      ))}
    </div>
    <div className="h-[34px] flex items-center border-b border-[#c4c4c4] shrink-0">
      <Handle />
      <Slot c="w-[32px]"><GreyPencil /></Slot>
      <Slot c="w-[30px]"><YPencil /></Slot>
      <Slot c="w-[30px]"><SaveGrey /></Slot>
      <Slot c="w-[34px]"><Blob /></Slot>
      <Slot c="w-[32px]"><ToolsGrey /></Slot>
      <Slot c="w-[8px]"><Caret c="#777" /></Slot>
      <div className="w-[409px] shrink-0" />
      <Sep />
      <Slot c="w-[44px]"><GreyA /></Slot>
      <Slot c="w-[30px]"><TriRuler /></Slot>
      <Slot><Blob k="a" /></Slot>
      <Slot c="w-[12px]"><Caret c="#777" /></Slot>
      {["a", "h", "d", "d", "d", "x", "x", "p", "p", "g", "g", "s", "s", "s", "l", "r"].map((k, n) => (
        <Slot key={n}>
          {k === "h" ? <svg width="26" height="26" viewBox="0 0 26 26"><circle cx="9" cy="9" r="7" fill="#e6e6e6" stroke="#c8c8c8" /><path d="M14 7h7l3 7-3 8h-8l-3-8z" fill="#e6e6e6" stroke="#c8c8c8" /></svg>
          : k === "p" ? <svg width="26" height="26" viewBox="0 0 26 26"><path d="M2 8c0-5 6-6 12-5s10 2 9 7-8 4-10 8-2 6-4 6-2-8-7-16z" fill="#dcdcd6" stroke="#c9c9c2" /></svg>
          : k === "g" ? <svg width="26" height="26" viewBox="0 0 26 26"><path d="M4 3l6 14 5-14" fill="none" stroke="#cfcfcf" strokeWidth="1.500" /><rect x="14" y="14" width="10" height="10" rx="1" fill="#cfcfcf" /></svg>
          : k === "s" ? <svg width="26" height="26" viewBox="0 0 26 26"><circle cx="8" cy="8" r="6" fill="#e2e0e0" stroke="#c8c2c2" /><circle cx="18" cy="8" r="6" fill="#e2e0e0" stroke="#c8c2c2" /><path d="M8 14l9 9M18 14l-9 9" stroke="#c9b8b8" strokeWidth="1.500" /></svg>
          : k === "l" ? <svg width="26" height="26" viewBox="0 0 26 26"><path d="M3 5h20M3 12h20M3 19h20M13 2v22" stroke="#d4d4d4" strokeWidth="1.300" strokeDasharray="4 1" /></svg>
          : k === "r" ? <svg width="26" height="26" viewBox="0 0 26 26"><path d="M14 3l8 9-8 5zM14 17l7 6H6zM5 18C3 11 6 5 12 4" fill="#e8e8e8" stroke="#cfcfcf" /></svg>
          : <Blob k={k} />}
        </Slot>
      ))}
      <Slot c="w-[11px]"><Caret c="#777" /></Slot>
      <div className="w-[59px] shrink-0" />
      <Sep />
      <Handle />
      <div className="w-[4px] shrink-0" />
      <Slot c="w-[26px]"><Python s={26} /></Slot>
      <Slot c="w-[33px]"><Hammer /></Slot>
      <Slot c="w-[30px]"><UndoBlue /></Slot>
      <Slot c="w-[12px]"><Caret /></Slot>
      <Slot c="w-[31px]"><RGis /></Slot>
      <Slot c="w-[31px]"><Tc /></Slot>
    </div>
    <div className="h-[34px] flex items-center border-b border-[#c4c4c4] shrink-0">
      <Handle />
      <Slot c="w-[32px]"><Magnet /></Slot>
      <Slot c="w-[26px]"><svg width="20" height="26" viewBox="0 0 20 26"><path d="M3 3l6 14 6-14M9 17l6-7" stroke="#d0d0d0" fill="none" /><circle cx="3" cy="3" r="2" fill="#ddd" /><circle cx="15" cy="3" r="2" fill="#ddd" /></svg></Slot>
      <Slot c="w-[7px]"><Caret c="#888" /></Slot>
      <Slot c="w-[28px]"><svg width="18" height="14" viewBox="0 0 18 14"><rect x="1" y="1" width="4" height="4" fill="#e0e0e0" /><rect x="13" y="3" width="4" height="4" fill="#e0e0e0" /><rect x="7" y="9" width="4" height="4" fill="#e0e0e0" /></svg></Slot>
      <div className="w-[72px] h-[22px] bg-white border border-[#c8c8c8] flex items-center pl-[3px] text-[12px] text-[#8a8a8a] shrink-0">12</div>
      <div className="w-[210px] shrink-0" />
      <Slot c="w-[15px]"><Caret c="#777" /></Slot>
      <Slot c="w-[34px]"><svg width="22" height="24" viewBox="0 0 22 24"><path d="M3 3l7 12 9-8M10 15l3 7" stroke="#d0d0d0" fill="none" strokeWidth="1.400" /></svg></Slot>
      <Sep />
      <Slot c="w-[6px]" />
      <Slot c="w-[33px]"><Heat /></Slot>
      <span className="w-[95px] text-[12px] shrink-0 whitespace-nowrap">Drainage Network:</span>
      <Combo c="w-[199px]" />
      <div className="w-[3px] shrink-0" />
      <Sep />
      <div className="w-[2px] shrink-0" />
      <Slot c="w-[30px]"><Plugin><Barcode /></Plugin></Slot>
      <Slot c="w-[31px]"><Plugin><Branch /></Plugin></Slot>
      <Slot c="w-[31px]"><Plugin><Branch dir="down" /></Plugin></Slot>
      <Slot c="w-[30px]"><Plugin><RiverHammer /></Plugin></Slot>
      <div className="w-[2px] shrink-0" />
      <Combo c="w-[200px]" />
      <Slot c="w-[30px]"><Plugin><Tee /></Plugin></Slot>
      <Sep />
      <Handle />
      <Slot c="w-[29px]"><HammerGreen /></Slot>
      <Slot c="w-[28px]"><MapGrey /></Slot>
      <div className="w-[4px] shrink-0" />
      <Sep />
      <Handle />
      <Slot c="w-[30px]"><Drop /></Slot>
      <span className="w-[83px] text-[12px] shrink-0 whitespace-nowrap">CompPlex Tools:</span>
      <Slot><Flower c="#f39a1d" d="#c65a10" /></Slot>
      <Slot><Flower c="#a8b8dc" d="#7f94c6" /></Slot>
      <Slot><Flower c="#39a58e" d="#1d6e74" /></Slot>
    </div>
    <div className="h-[12px] border-b border-[#9a9a9a] flex items-center pl-[3px] gap-[9px] shrink-0">
      <span className="w-[3px] h-[6px] bg-[#c4c4c4]" />
      <span className="w-[3px] h-[6px] bg-[#c4c4c4]" />
    </div>
  </div>
);

const SpinBtns = () => (
  <div className="w-[11px] h-full ml-auto border-l border-[#ddd] flex flex-col">
    <div className="flex-1 flex items-center justify-center"><ChevronUp size={9} strokeWidth={3} color="#333" /></div>
    <div className="flex-1 flex items-center justify-center"><ChevronDown size={9} strokeWidth={3} color="#333" /></div>
  </div>
);

const StatusBar = () => (
  <div className="h-[27px] flex items-center text-[11px] shrink-0 border-t border-[#c8c8c8]">
    <div className="ml-[4px] w-[200px] h-[20px] bg-white border border-[#7a7a7a] flex items-center pl-[7px] gap-[6px] text-[12px] text-[#8a8a8a] shrink-0">
      <Search size={13} color="#888" />
      Type to locate (Ctrl+K)
    </div>
    <span className="ml-[928px] w-[53px] shrink-0">Coordinate</span>
    <div className="w-[109px] h-[20px] bg-white border border-[#7a7a7a] flex items-center justify-center shrink-0">-46.9999,-21.4647</div>
    <svg width="16" height="20" viewBox="0 0 16 20" className="ml-[3px] shrink-0"><path d="M3 2c8 3 8 6 1 8 8 2 8 6 0 8M13 2C5 5 5 8 12 10c-7 2-7 6 1 8" stroke="#555" strokeWidth="1.500" fill="none" /></svg>
    <span className="ml-[11px] w-[30px] shrink-0">Scale</span>
    <div className="w-[78px] h-[20px] bg-white border border-[#7a7a7a] flex items-center pl-[3px] shrink-0">1:100620<ChevronDown size={11} className="ml-auto mr-[3px]" /></div>
    <svg width="12" height="18" viewBox="0 0 12 18" className="ml-[10px] shrink-0"><path d="M3 8V4a3 3 0 016 0v4" stroke="#888" strokeWidth="1.600" fill="none" /><rect x="1" y="8" width="10" height="9" rx="1" fill="#666" /></svg>
    <span className="ml-[3px] w-[47px] shrink-0">Magnifier</span>
    <div className="w-[82px] h-[20px] bg-white border border-[#7a7a7a] flex items-center pl-[3px] shrink-0">100%<SpinBtns /></div>
    <span className="ml-[8px] w-[51px] shrink-0">Rotation</span>
    <div className="w-[80px] h-[20px] bg-white border border-[#7a7a7a] flex items-center pl-[3px] shrink-0">0.0 °<SpinBtns /></div>
    <Chk on c="ml-[6px] mr-[4px]" />
    <span className="w-[50px] shrink-0">Render</span>
    <svg width="16" height="16" viewBox="0 0 16 16" className="shrink-0"><circle cx="8" cy="8" r="6" fill="#9fb3c8" stroke="#555" strokeDasharray="2 1" /></svg>
    <span className="ml-[2px] w-[70px] shrink-0">EPSG:4674</span>
    <svg width="16" height="20" viewBox="0 0 16 20" className="shrink-0"><path d="M2 1h12v12H9l-1 6-2-6H2z" fill="#555" /><path d="M5 7h1M8 7h1M11 7h1" stroke="#fff" /></svg>
  </div>
);

// ---------- windows taskbar
const AppIco = ({ k, s = 22 }) => {
  const v = (c) => <svg width={s} height={s} viewBox="0 0 24 24">{c}</svg>;
  if (k === "calc") return v(<><rect x="6" y="1" width="12" height="22" rx="1" fill="#56687c" /><rect x="8" y="3" width="8" height="4" fill="#b8d0e6" /><path d="M8 10h8M8 14h8M8 18h8" stroke="#a8b8c8" strokeWidth="2" strokeDasharray="3 1" /></>);
  if (k === "app") return v(<><rect x="3" y="2" width="18" height="20" rx="1" fill="#69aee4" /><rect x="6" y="6" width="6" height="6" fill="#d8ecfa" /><path d="M14 8h5M14 12h5M6 16h13" stroke="#fff" /><circle cx="10" cy="9" r="2" fill="#d9a43b" /></>);
  if (k === "bag") return v(<><path d="M9 1h6v3H9z" fill="#1f6ab3" /><path d="M5 4h14l1 19H4z" fill="#1f4a7e" /><rect x="9" y="10" width="3" height="3" fill="#f25022" /><rect x="13" y="10" width="3" height="3" fill="#7fba00" /><rect x="9" y="14" width="3" height="3" fill="#00a4ef" /><rect x="13" y="14" width="3" height="3" fill="#ffb900" /></>);
  if (k === "mail") return v(<><path d="M12 1l9 11H3z" fill="#1b6fbe" /><path d="M3 10h18v13H3z" fill="#4aa6e4" /><path d="M3 10l9 8 9-8z" fill="#d6ecfa" /></>);
  if (k === "ff") return v(<><circle cx="12" cy="13" r="10" fill="#f2542d" /><path d="M6 6c2-3 5-5 8-5-1 3 6 5 7 13-4-8-10-6-15-8z" fill="#ffb224" /><circle cx="12" cy="13" r="5" fill="#7c3aa8" /></>);
  if (k === "folder") return v(<><path d="M2 7h8l2-3h10v17H2z" fill="#f6cf5a" /><path d="M2 10h20v11H2z" fill="#fbe08c" /></>);
  if (k === "edge") return v(<><path d="M12 1C5 1 1 7 1 12c0 7 7 12 14 10 5-1 7-5 7-6-4 3-12 3-13-3 2-5 13-4 13-1 1-7-4-11-10-11z" fill="#1d9cc5" /><path d="M9 13c0 5 5 8 9 6 1 0 3-2 4-3-4 3-12 3-13-3z" fill="#2bc79a" /></>);
  if (k === "outlook") return v(<><rect x="8" y="2" width="15" height="20" fill="#28a8ea" /><rect x="8" y="2" width="8" height="10" fill="#0078d4" /><rect x="1" y="6" width="13" height="13" fill="#0f5cab" /><text x="7.500" y="16.500" textAnchor="middle" fontSize="10" fontWeight="bold" fill="#fff">O</text></>);
  if (k === "chrome") return v(<><circle cx="12" cy="12" r="11" fill="#db4437" /><path d="M12 23A11 11 0 013 6l5 9z" fill="#0f9d58" /><path d="M23 8A11 11 0 0112 23l5-9z" fill="#f4b400" /><circle cx="12" cy="12" r="5" fill="#fff" /><circle cx="12" cy="12" r="4" fill="#4285f4" /></>);
  if (k === "py") return v(<><path d="M6 2l9 1 6 4-3 7-5 7-5 2z" fill="#21d789" /><path d="M15 3l6 4-3 7-5-3z" fill="#fcf84a" /><path d="M8 18l5 3-5 2z" fill="#07c3f2" /><rect x="7" y="8" width="8" height="8" fill="#111" /></>);
  if (k === "cmd") return v(<><rect x="3" y="2" width="18" height="21" fill="#111" stroke="#999" /><path d="M6 7l3 2-3 2M10 12h4" stroke="#ddd" fill="none" /></>);
  if (k === "osgeo") return v(<><circle cx="12" cy="12" r="10" fill="#fff" stroke="#3b8a5d" strokeWidth="1.500" /><path d="M12 2l2 10-2 10-2-10zM2 12l10-2 10 2-10 2z" fill="#1f6a45" /></>);
  if (k === "micro") return v(<><path d="M10 1h4v3l3 9-2 4H8v-3l2-8z" fill="#222" /><path d="M5 21h15v2H5z" fill="#222" /><circle cx="12" cy="8" r="2" fill="#e8d040" /></>);
  if (k === "fiji") return v(<><rect x="4" y="3" width="16" height="20" fill="#dde5ef" stroke="#9fb2c9" /><path d="M9 7v12M14 7v8" stroke="#5f7fa8" strokeWidth="2" /></>);
  if (k === "ppt") return v(<><circle cx="13" cy="12" r="10" fill="#ed6c47" /><path d="M13 2a10 10 0 0110 10H13z" fill="#ff8f6b" /><rect x="2" y="6" width="12" height="12" fill="#c43e1c" /><text x="8" y="16" textAnchor="middle" fontSize="10" fontWeight="bold" fill="#fff">P</text></>);
  if (k === "ferr") return v(<><circle cx="12" cy="9" r="8" fill="#fff" stroke="#d98c8c" /><path d="M8 3l8 16 3 4M16 3L9 14l-4 8" stroke="#c44" fill="none" /><circle cx="16" cy="19" r="2.500" fill="#4a90c8" /></>);
  if (k === "word") return v(<><rect x="7" y="2" width="15" height="20" fill="#2b7cd3" /><path d="M7 8h15v7H7z" fill="#185abd" /><path d="M7 15h15v7H7z" fill="#103f91" /><rect x="2" y="6" width="12" height="12" fill="#185abd" /><text x="8" y="16" textAnchor="middle" fontSize="10" fontWeight="bold" fill="#fff">W</text></>);
  if (k === "q") return <Q s={s} />;
  return null;
};

const WinLogo = () => (
  <svg width="18" height="18" viewBox="0 0 18 18" className="shrink-0"><path d="M0 2.500L7.500 1.500V8.500H0zM8.500 1.300L18 0V8.500H8.500zM0 9.500H7.500V16.500L0 15.500zM8.500 9.500H18V18L8.500 16.700z" fill="#111" /></svg>
);
const Cortana = () => <div className="w-[16px] h-[16px] rounded-full border-[2.5px] border-[#111]" />;
const TaskView = () => (
  <svg width="16" height="16" viewBox="0 0 16 16"><path d="M3 1h10M1 4h14v8H1zM3 15h10" fill="none" stroke="#111" /></svg>
);
const Tray = () => (
  <>
    <ChevronUp size={14} color="#222" className="shrink-0" />
    <svg width="12" height="16" viewBox="0 0 12 16" className="ml-[8px] shrink-0"><rect x="2" y="3" width="8" height="12" rx="1" fill="none" stroke="#222" /><path d="M4 1h4" stroke="#222" /></svg>
    <svg width="14" height="14" viewBox="0 0 14 14" className="ml-[8px] shrink-0"><path d="M1 2h12v8H1zM5 13h4M7 10v3" fill="none" stroke="#222" /></svg>
    <svg width="16" height="14" viewBox="0 0 16 14" className="ml-[8px] shrink-0"><path d="M1 5h3l4-4v12l-4-4H1zM11 4c1 2 1 4 0 6M13 2c2 3 2 7 0 10" fill="none" stroke="#222" /></svg>
  </>
);
const Clk = ({ c = "" }) => (
  <div className={"flex flex-col items-center text-[12px] leading-[18px] text-[#111] shrink-0 " + c}>
    <span>10:52 AM</span>
    <span>3/1/2022</span>
  </div>
);
const TaskBtn = ({ k, t, on }) => (
  <div className={"w-[83px] mr-[9px] h-full flex items-center pl-[5px] gap-[4px] relative shrink-0 text-[12px] whitespace-nowrap text-[#111]"}>
    <AppIco k={k} />
    <span>{t}</span>
    {on && <span className="absolute left-0 right-0 bottom-0 h-[3px] bg-[#2aa3f3]" />}
  </div>
);

const LeftTaskbar = () => (
  <div className="h-[40px] bg-[#eeeeee] flex items-center shrink-0">
    <div className="w-[48px] flex justify-center shrink-0"><WinLogo /></div>
    <div className="w-[344px] h-[40px] bg-white border border-[#cfcfcf] flex items-center pl-[12px] gap-[11px] text-[15px] text-[#333] shrink-0">
      <Search size={18} color="#222" className="-scale-x-100" />
      Digite aqui para pesquisar
    </div>
    <div className="w-[47px] flex justify-center shrink-0"><Cortana /></div>
    <div className="w-[45px] flex justify-center shrink-0"><TaskView /></div>
    {["app", "bag", "mail", "calc", "ff"].map((k) => (
      <div key={k} className="w-[43.5px] flex justify-center shrink-0"><AppIco k={k} s={24} /></div>
    ))}
    <div className="w-[4px] shrink-0" />
    <div className="h-full flex shrink-0">
      <TaskBtn k="folder" t="Compl..." on />
      <div className="w-[44px] -ml-[9px] flex items-center justify-center shrink-0"><AppIco k="edge" s={24} /></div>
      <div className="w-[44px] flex items-center justify-center shrink-0"><AppIco k="outlook" s={24} /></div>
      <div className="w-[2px] shrink-0" />
      <TaskBtn k="chrome" t="Google..." on />
      <TaskBtn k="py" t="PyScrip..." on />
      <TaskBtn k="osgeo" t="Admini..." on />
      <TaskBtn k="fiji" t="(Fiji Is..." on />
      <TaskBtn k="ppt" t="Aprese..." on />
      <TaskBtn k="ferr" t="Ferram..." on />
      <TaskBtn k="word" t="CompP..." on />
      <div className="w-[83px] mr-[3px] h-full flex items-center pl-[5px] gap-[4px] relative text-[12px] whitespace-nowrap shrink-0">
        <AppIco k="word" />
        <span>Comp...</span>
        <span className="absolute left-0 right-0 bottom-0 h-[3px] bg-[#2aa3f3]" />
      </div>
      <div className="w-[91px] h-full bg-[#f8f8f8] flex items-center pl-[8px] gap-[4px] relative text-[12px] whitespace-nowrap shrink-0">
        <AppIco k="q" />
        <span>testeQ...</span>
        <span className="absolute left-0 right-0 bottom-0 h-[3px] bg-[#2aa3f3]" />
      </div>
    </div>
    <div className="ml-[7px] flex items-center shrink-0"><Tray /></div>
    <Clk c="ml-[12px]" />
    <svg width="17" height="17" viewBox="0 0 17 17" className="ml-[22px] shrink-0"><path d="M1 1h15v11h-5l-3 4v-4H1z" fill="none" stroke="#222" /></svg>
  </div>
);

const QgisWindow = () => (
  <div className="w-[1920px] h-[1080px] flex flex-col bg-[#f0f0f0] relative shrink-0 text-[#111]">
    <div className="h-[23px] bg-[#27a2f1] flex items-center pl-[3px] text-[13px] text-[#111] shrink-0">
      <Q />
      <span className="ml-[4px] flex-1">testeQ3 — QGIS</span>
      <Minus size={15} strokeWidth={1} color="#111" className="mr-[31px]" />
      <svg width="12" height="12" viewBox="0 0 12 12" className="mr-[33px]"><path d="M3 3V1h8v8H9M1 3h8v8H1z" fill="none" stroke="#111" /></svg>
      <X size={15} strokeWidth={1} color="#111" className="mr-[12px]" />
    </div>
    <div className="h-[21px] bg-white flex items-center text-[12px] shrink-0">
      {menuItems.map(([t, c]) => <div key={t} className={c + " flex items-center shrink-0"}>{t}</div>)}
    </div>
    <Toolbars />
    <div className="flex-1 flex min-h-0">
      <LeftStrip />
      <div className="w-[346px] shrink-0 flex flex-col pt-[1px]">
        <Browser />
        <Layers />
        <Aequilibrae />
      </div>
      <div className="w-[5px] shrink-0" />
      <div className="w-[1190px] bg-white border-l border-r border-[#9a9a9a] flex items-start justify-start pl-[130px] pt-[68px] shrink-0">
        <MapRaster />
      </div>
      <div className="w-[5px] shrink-0" />
      <Toolbox />
    </div>
    <StatusBar />
    <LeftTaskbar />
    <SettingsMenu />
  </div>
);

// ---------- word
const Launcher = () => (
  <svg width="8" height="8" viewBox="0 0 8 8" className="shrink-0"><path d="M.5 7.500V.5h7v7zM3 3l3 3M6 3.500V6H3.500" fill="none" stroke="#666" strokeWidth=".8" /></svg>
);

const Group = ({ c, label, launcher, children }) => (
  <div className={c + " h-full border-r border-[#d4d4d4] flex flex-col shrink-0"}>
    <div className="flex-1 min-h-0">{children}</div>
    <div className="h-[18px] flex items-center justify-center text-[12px] text-[#444] relative">
      {label}
      {launcher && <span className="absolute right-[3px] top-[5px]"><Launcher /></span>}
    </div>
  </div>
);

const Small = () => <ChevronDown size={9} color="#444" className="shrink-0" />;

const Lines = ({ a = "left", s = 22 }) => {
  const ends = { left: [[3, 21], [3, 15], [3, 21], [3, 15]], center: [[3, 21], [6, 18], [3, 21], [6, 18]], right: [[3, 21], [9, 21], [3, 21], [9, 21]], just: [[3, 21], [3, 21], [3, 21], [3, 21]] }[a];
  return (
    <svg width={s} height={s} viewBox="0 0 24 24" className="shrink-0">
      {ends.map(([x1, x2], n) => <path key={n} d={`M${x1} ${5 + n * 5}H${x2}`} stroke="#222" strokeWidth="1.200" />)}
    </svg>
  );
};

const BulletI = ({ c }) => (
  <svg width="20" height="20" viewBox="0 0 20 20" className="shrink-0">
    <path d="M8 4h11M8 10h11M8 16h11" stroke="#222" strokeWidth="1.200" />
    <g fill={c}><rect x="1" y="2" width="4" height="4" /><rect x="1" y="8" width="4" height="4" /><rect x="1" y="14" width="4" height="4" /></g>
  </svg>
);
const IndentI = ({ rev }) => (
  <svg width="20" height="20" viewBox="0 0 20 20" className="shrink-0">
    <path d="M2 3h16M9 8h9M9 12h9M2 17h16" stroke="#222" strokeWidth="1.200" />
    <path d={rev ? "M2 10h5M5 8l2 2-2 2" : "M7 10H2M4 8l-2 2 2 2"} stroke="#2b7cd3" fill="none" />
  </svg>
);

const styleItems = [
  { t: "¶ Normal", s: "AaBbCcDc", c: "text-[13px] text-black", on: true },
  { t: "¶ Sem Esp...", s: "AaBbCcDc", c: "text-[13px] text-black" },
  { t: "Título 1", s: "AaBbCc", c: "text-[18px] text-[#2f5496]" },
  { t: "Título 2", s: "AaBbCcD", c: "text-[15px] text-[#2f5496]" },
  { t: "Título", s: "AaB", c: "text-[31px] text-black leading-[30px]" },
  { t: "Subtítulo", s: "AaBbCcD", c: "text-[13px] text-[#555] tracking-[.6px]" },
  { t: "Ênfase Sutil", s: "AaBbCcDc", c: "text-[13px] italic text-[#404040]" },
  { t: "Ênfase", s: "AaBbCcDc", c: "text-[13px] italic text-black" },
  { t: "Ênfase Int...", s: "AaBbCcDc", c: "text-[13px] italic text-[#3b78d0]" },
  { t: "Forte", s: "AaBbCcDc", c: "text-[13px] font-bold text-black" },
  { t: "Citação", s: "AaBbCcDc", c: "text-[13px] italic text-[#404040]" },
  { t: "Citação In...", s: "AaBbCcDc", c: "text-[13px] italic text-[#3b78d0] border-y border-[#3b78d0] h-[20px] w-[56px]" },
];

const Ribbon = () => (
  <div className="flex-1 flex min-h-0 bg-[#f3f2f1]">
    <Group c="w-[202px]" label="Área de Transferência" launcher>
      <div className="flex pt-[5px] h-full">
        <div className="w-[52px] pl-[11px] flex flex-col items-center">
          <svg width="30" height="30" viewBox="0 0 30 30" className="shrink-0"><path d="M1 6h5V3h8v3h5v23H1z" fill="#fff" stroke="#d2771f" strokeWidth="1.400" /><rect x="14" y="12" width="14" height="17" fill="#fff" stroke="#333" /></svg>
          <span className="text-[12px] leading-[16px] mt-[3px] text-[#333]">Colar</span>
          <ChevronDown size={9} color="#444" className="mt-[3px]" />
        </div>
        <div className="ml-[3px] flex flex-col text-[12px]">
          <div className="h-[24px] flex items-center gap-[3px] text-[#a5a5a5]"><Scissors size={14} color="#a0a0a0" strokeWidth={1.2} />Recortar</div>
          <div className="h-[24px] flex items-center gap-[3px] text-[#a5a5a5]"><Copy size={14} color="#a0a0a0" strokeWidth={1.2} />Copiar</div>
          <div className="h-[24px] flex items-center gap-[3px] text-[#333] whitespace-nowrap"><Paintbrush size={14} color="#d2771f" strokeWidth={1.6} />Pincel de Formatação</div>
        </div>
      </div>
    </Group>
    <Group c="w-[295px]" label="Fonte" launcher>
      <div className="pl-[7px] pt-[10px] flex flex-col">
        <div className="flex items-center h-[23px] text-[12px]">
          <div className="w-[93px] h-[23px] bg-white border border-[#c8c8c8] flex items-center pl-[3px] text-[#222] shrink-0">Calibri (Corpo)<Small /></div>
          <div className="w-[61px] ml-[2px] h-[23px] bg-white border border-[#c8c8c8] flex items-center pl-[3px] shrink-0">11<span className="ml-auto mr-[2px]"><Small /></span></div>
          <span className="ml-[6px] text-[18px] w-[25px] text-[#333]">A<sup className="text-[7px]">^</sup></span>
          <span className="text-[16px] w-[22px] text-[#333]">A<sup className="text-[7px]">ˇ</sup></span>
          <div className="w-px h-[22px] bg-[#d4d4d4] mr-[6px]" />
          <span className="text-[13px] text-[#333] w-[22px]">Aa</span><Small />
          <div className="w-px h-[22px] bg-[#d4d4d4] mx-[6px]" />
          <span className="text-[17px] text-[#333]">A</span><span className="w-[8px] h-[8px] bg-[#c78fd6] rotate-45 -ml-[3px] mt-[7px]" />
        </div>
        <div className="flex items-center h-[23px] mt-[9px] text-[#222] pl-[5px]">
          <span className="w-[23px] font-bold text-[15px]">N</span>
          <span className="w-[22px] italic text-[15px] [font-family:'Liberation_Serif',serif]">I</span>
          <span className="w-[16px] underline text-[14px]">S</span><span className="w-[10px]"><Small /></span>
          <span className="w-[24px] line-through text-[13px] ml-[4px]">ab</span>
          <span className="w-[24px] text-[14px]">x<sub className="text-[8px] text-[#2b7cd3]">2</sub></span>
          <span className="w-[19px] text-[14px]">x<sup className="text-[8px] text-[#2b7cd3]">2</sup></span>
          <div className="w-px h-[22px] bg-[#d4d4d4] mr-[6px]" />
          <span className="w-[16px] text-[#2b7cd3] font-bold text-[19px]">A</span><Small />
          <div className="w-[14px] ml-[9px] flex flex-col items-center"><Pen size={13} color="#333" strokeWidth={1.3} /><span className="w-[16px] h-[4px] bg-[#ffef00]" /></div>
          <span className="ml-[2px]"><Small /></span>
          <div className="w-[14px] ml-[8px] flex flex-col items-center text-[14px] leading-[14px]">A<span className="w-[16px] h-[4px] bg-[#e60000]" /></div>
          <span className="ml-[4px]"><Small /></span>
        </div>
      </div>
    </Group>
    <Group c="w-[247px]" label="Parágrafo" launcher>
      <div className="pl-[10px] pt-[10px] flex flex-col">
        <div className="flex items-center h-[23px]">
          <BulletI c="#2b7cd3" /><span className="ml-[4px] mr-[9px]"><Small /></span>
          <BulletI c="#2b7cd3" /><span className="ml-[4px] mr-[9px]"><Small /></span>
          <BulletI c="#2b7cd3" /><Small />
          <div className="w-px h-[22px] bg-[#d4d4d4] mx-[7px]" />
          <IndentI /><span className="w-[5px]" /><IndentI rev />
          <div className="w-px h-[22px] bg-[#d4d4d4] mx-[7px]" />
          <div className="w-[21px] text-[10px] leading-[10px] text-[#2b7cd3] font-bold flex flex-col">A<span className="text-[#222]">Z↓</span></div>
          <div className="ml-[6px] w-[22px] h-[23px] bg-[#c8c6c4] border border-[#8a8886] flex items-center justify-center text-[15px] font-bold text-[#222]">¶</div>
        </div>
        <div className="flex items-center h-[23px] mt-[9px]">
          <Lines /><span className="w-[2px]" /><Lines a="center" /><span className="w-[3px]" /><Lines a="right" />
          <div className="w-[23px] h-[26px] bg-[#c8c6c4] border border-[#8a8886] flex items-center justify-center"><Lines a="just" s={20} /></div>
          <span className="w-[6px]" />
          <svg width="20" height="20" viewBox="0 0 20 20" className="shrink-0"><path d="M8 4h11M8 10h11M8 16h11" stroke="#222" strokeWidth="1.200" /><path d="M3 2v16M1 5l2-3 2 3M1 15l2 3 2-3" stroke="#2b7cd3" fill="none" /></svg>
          <Small />
          <div className="w-px h-[22px] bg-[#d4d4d4] mx-[7px]" />
          <svg width="20" height="20" viewBox="0 0 20 20" className="shrink-0"><path d="M10 2L4 9l5 5 6-6zM15 11c-1 2-1 3 0 3s1-1 0-3z" fill="none" stroke="#333" /><path d="M3 16h14v3H3z" fill="#fff" stroke="#888" /></svg>
          <span className="ml-[1px] mr-[11px]"><Small /></span>
          <svg width="20" height="20" viewBox="0 0 20 20" className="shrink-0"><path d="M2 2h16M2 2v16M18 2v16M10 2v16M2 10h16" stroke="#555" strokeDasharray="1 1" fill="none" /><path d="M2 18h16" stroke="#111" strokeWidth="1.300" /></svg>
          <span className="ml-[3px]"><Small /></span>
        </div>
      </div>
    </Group>
    <Group c="w-[901px]" label="Estilos" launcher>
      <div className="ml-[9px] mt-[4px] w-[881px] h-[60px] bg-white border border-[#d0d0d0] flex">
        {styleItems.map((it) => (
          <div key={it.t} className={"w-[72px] h-full flex flex-col items-center overflow-hidden shrink-0 " + (it.on ? "border-2 border-[#9a9a9a]" : "")}>
            <div className="h-[38px] flex items-center justify-center overflow-hidden w-[65px]">
              <span className={"whitespace-nowrap [font-family:Lato,sans-serif] " + it.c}>{it.s}</span>
            </div>
            <span className="text-[12px] text-[#555] whitespace-nowrap">{it.t}</span>
          </div>
        ))}
        <div className="w-[14px] ml-auto flex flex-col border-l border-[#d0d0d0] bg-[#f3f2f1]">
          <div className="flex-1 flex items-center justify-center"><ChevronUp size={9} color="#aaa" /></div>
          <div className="flex-1 flex items-center justify-center border-y border-[#d0d0d0] bg-white"><ChevronDown size={9} color="#333" /></div>
          <div className="flex-1 flex items-center justify-center bg-white"><ChevronDown size={9} color="#333" /></div>
        </div>
      </div>
    </Group>
    <Group c="w-[110px]" label="Editando">
      <div className="pl-[11px] pt-[3px] flex flex-col text-[12px] text-[#333]">
        <div className="h-[23px] flex items-center gap-[2px]"><Search size={17} className="-scale-x-100" strokeWidth={1.2} />Localizar<span className="ml-[5px]"><Small /></span></div>
        <div className="h-[23px] flex items-center gap-[4px]"><span className="text-[11px] w-[15px] text-[#8a3ab9] leading-none">b<span className="text-[#2b7cd3]">c</span></span>Substituir</div>
        <div className="h-[23px] flex items-center gap-[2px]"><MousePointer2 size={15} strokeWidth={1.2} />Selecionar<Small /></div>
      </div>
    </Group>
    <Group c="w-[58px]" label="Voz">
      <div className="flex flex-col items-center pt-[3px] text-[12px] text-[#333]">
        <Mic size={32} color="#4a90d9" fill="#8ebcec" strokeWidth={1.2} />
        <span className="mt-[5px]">Ditar</span>
      </div>
    </Group>
    <Group c="w-[59px]" label="Editor">
      <div className="flex flex-col items-center pt-[3px] text-[12px] text-[#333]">
        <svg width="30" height="32" viewBox="0 0 30 32"><path d="M3 30L7 12 17 1l5 3-8 14z" fill="#fff" stroke="#1f5fb8" strokeWidth="2" /><path d="M15 8h14l-4 5H12zM13 14h12l-4 5H10zM10 20h9l-4 5H7z" fill="#1f5fb8" /></svg>
        <span className="mt-[5px]">Editor</span>
      </div>
    </Group>
    <div className="flex-1 flex items-end justify-end pr-[6px] pb-[2px]"><ChevronUp size={14} color="#444" /></div>
  </div>
);

const tabs = [
  ["Arquivo", "w-[88px] pl-[13px]"], ["Página Inicial", "w-[107px]"], ["Inserir", "w-[64px]"], ["Design", "w-[69px]"], ["Layout", "w-[67px]"],
  ["Referências", "w-[96px]"], ["Correspondências", "w-[134px]"], ["Revisão", "w-[73px]"], ["Exibir", "w-[61px]"], ["Ajuda", "w-[60px]"],
];

const Line = ({ text, c = "" }) => (
  <div className={"flex justify-between h-[38.6px] items-center whitespace-nowrap " + c}>
    {text.split("·").filter(Boolean).map((w, n, arr) => (
      <span key={n}>{w}{n < arr.length - 1 || text.endsWith("·") ? "·" : ""}</span>
    ))}
  </div>
);

const Doc = () => (
  <div className="flex-1 min-h-0 bg-[#e6e6e6] flex flex-col overflow-hidden">
    <div className="h-[15px] mt-[5px] flex items-center shrink-0 text-[9px] text-[#555]">
      <div className="w-[20px] h-[15px] ml-[3px] bg-white border border-[#d0d0d0] shrink-0" />
      <div className="w-[145px] shrink-0" />
      <div className="w-[227px] h-[13px] bg-[#c8c8c8] flex items-center justify-around shrink-0"><span>2</span><span>1</span><span>·</span></div>
      <div className="w-[1133px] h-[13px] bg-white flex items-center justify-around shrink-0">
        {["1", "2", "3", "4", "5", "6", "7", "8", "9", "10", "11", "12", "13", "14"].map((n) => <span key={n}>{n}</span>)}
      </div>
      <div className="w-[228px] h-[13px] bg-[#c8c8c8] flex items-center justify-around shrink-0"><span>15</span><span>16</span></div>
    </div>
    <div className="ml-[171px] mt-[40px] w-[1585px] flex-1 bg-white shadow-[0_0_2px_rgba(0,0,0,.25)] pl-[226px] pr-[218px] pt-[188px] overflow-hidden text-[26.5px] text-black [font-family:Lato,sans-serif] shrink-0">
      <div className="font-bold text-center text-[27.3px] h-[39px] leading-[39px] whitespace-nowrap">
        <span className="underline decoration-wavy decoration-[#e02020] decoration-1 underline-offset-4">CompPlex</span>·Tools:·Ferramenta·para·cálculo·de·medidas·de·complexidade·em·imagens·de·
      </div>
      <div className="font-bold text-center text-[27.3px] h-[39px] leading-[39px] mb-[21px]">sensoriamento·remoto·acoplada·em·SIG·livre¶</div>
      <div className="font-bold text-[27.3px] h-[39px] leading-[39px] mb-[21px]">1·Introdução¶</div>
      <div className="h-[39px] leading-[39px] mb-[21px] pl-[78px]">¶</div>
      <div className="font-bold text-[27.3px] h-[39px] leading-[39px] mb-[17px]">2·Cálculos·das·medidas·de·complexidade¶</div>
      <Line c="ml-[75px]" text="Aplicando-se·a·teoria·informacional·de·Shannon·(1949)·aos·dados·de·reflectância·em·uma·" />
      <Line text="banda·de·uma·imagem·de·SR,·e·estes·sendo·representados·por·sua·discretização·em·números·" />
      <Line text="digitais·(DN)·à·medida·que·a·ocorrência·de·um·determinado·grupo·de·valores·de·DN·se·torna·" />
      <Line text="mais·provável·do·que·outros·valores,·a·entropia·da·imagem·decresce.·O·valor·máximo·da·" />
      <Line text="entropia·da·imagem·neste·caso·somente·seria·atingido·quando·a·ocorrência·dos·valores·de·DN·" />
      <Line text="na·imagem·é·equiprovável,·não·havendo·tendência·de·concentração·de·probabilidades·de·um·" />
      <div className="h-[39px] leading-[39px] mb-[23px]">determinado·valor.¶</div>
      <Line c="ml-[75px]" text="Sendo·N·o·número·de·estados·de·DN·(quantidade·de·valores·de·DN·sem·repetições)·em·" />
    </div>
  </div>
);

const WordStatus = () => (
  <div className="h-[22px] bg-[#f3f2f1] border-t border-[#c8c8c8] flex items-center text-[11px] text-[#444] shrink-0">
    <span className="ml-[7px] w-[88px] shrink-0">Página 1 de 6</span>
    <span className="w-[89px] shrink-0">1690 palavras</span>
    <svg width="14" height="16" viewBox="0 0 14 16" className="shrink-0"><path d="M1 1h8l3 3v11H1z" fill="none" stroke="#444" /><path d="M6 6l5 7" stroke="#444" /></svg>
    <span className="ml-[18px] w-[125px] shrink-0">Português (Brasil)</span>
    <svg width="14" height="16" viewBox="0 0 14 16" className="shrink-0"><path d="M1 1h12v14H1zM4 5h6M4 9h6" fill="none" stroke="#444" /></svg>
    <svg width="16" height="16" viewBox="0 0 16 16" className="ml-[19px] shrink-0"><circle cx="8" cy="3" r="2" fill="none" stroke="#444" /><path d="M2 6h12M8 6v4l-3 5M8 10l3 5" fill="none" stroke="#444" /></svg>
    <span className="ml-[4px] w-[1159px] shrink-0">Acessibilidade: investigar</span>
    <svg width="13" height="16" viewBox="0 0 13 16" className="shrink-0"><path d="M1 1h11v14H1z" fill="none" stroke="#444" strokeDasharray="3 2" /></svg>
    <span className="ml-[3px] w-[47px] shrink-0">Foco</span>
    <Lines a="just" s={16} />
    <div className="ml-[7px] w-[31px] h-full bg-[#c8c6c4] flex items-center justify-center shrink-0"><Lines a="just" s={16} /></div>
    <div className="w-[50px] flex justify-center shrink-0"><svg width="14" height="16" viewBox="0 0 14 16"><path d="M1 1h12v14H1z" fill="none" stroke="#444" /><circle cx="7" cy="8" r="3" fill="none" stroke="#444" /></svg></div>
    <span className="w-[12px] text-center shrink-0">-</span>
    <div className="w-[99px] h-px bg-[#444] relative shrink-0"><span className="absolute left-[62px] -top-[6px] w-[2px] h-[13px] bg-[#444]" /></div>
    <span className="ml-[3px] w-[14px] text-center shrink-0">+</span>
    <span className="ml-[5px] shrink-0">200%</span>
  </div>
);

const WordTaskbar = () => (
  <div className="h-[40px] bg-[#eeeeee] flex items-center shrink-0">
    <div className="w-[44px] flex justify-center shrink-0"><WinLogo /></div>
    <div className="w-[48px] flex justify-center shrink-0"><Search size={18} color="#111" className="-scale-x-100" /></div>
    <div className="w-[49px] flex justify-center shrink-0"><Cortana /></div>
    <div className="w-[47px] flex justify-center shrink-0"><TaskView /></div>
    {[["app"], ["bag"], ["mail"], ["calc"], ["ff"], ["folder", 1], ["edge"], ["outlook"], ["chrome", 1], ["py", 1], ["cmd", 1], ["micro", 1], ["ppt", 1], ["ferr", 1], ["word", 1]].map(([k, on]) => (
      <div key={k} className="w-[49px] h-full flex items-center justify-center relative shrink-0">
        <AppIco k={k} s={24} />
        {on && <span className="absolute left-[5px] right-[5px] bottom-0 h-[3px] bg-[#2aa3f3]" />}
      </div>
    ))}
    <div className="w-[49px] h-full bg-[#f8f8f8] flex items-center justify-center relative shrink-0">
      <AppIco k="q" s={24} />
      <span className="absolute left-0 right-0 bottom-0 h-[3px] bg-[#2aa3f3]" />
    </div>
    <Clk c="ml-auto mr-[10px]" />
  </div>
);

const WordWindow = () => (
  <div className="w-[1920px] h-[1080px] flex flex-col shrink-0 text-[#222]">
    <div className="h-[34px] bg-[#2b579a] flex items-center text-[#d0dcec] text-[12px] relative overflow-hidden shrink-0">
      <svg width="520" height="34" viewBox="0 0 520 34" className="absolute right-0 top-0">
        <g fill="none" stroke="#234a85" strokeWidth="2.500">
          <path d="M0 14h190M190 14c20-20 60-20 80 0s-10 30-40 30" />
          <circle cx="260" cy="12" r="20" />
          <path d="M60 34l20-14h60M330 34l30-26h110l40 26" />
          <circle cx="-1" cy="14" r="4" />
        </g>
      </svg>
      <span className="ml-[21px] w-[132px] relative shrink-0">Salvamento Automático</span>
      <div className="ml-[3px] w-[38px] h-[17px] rounded-full border-2 border-white flex items-center pl-[2px] relative shrink-0"><span className="w-[9px] h-[9px] rounded-full bg-white" /></div>
      <Save size={18} strokeWidth={1.1} className="ml-[12px] shrink-0" />
      <Undo2 size={17} strokeWidth={1.3} className="ml-[12px] shrink-0" />
      <ChevronDown size={9} className="ml-[2px] shrink-0" />
      <Redo2 size={17} strokeWidth={1} className="ml-[10px] text-[#6f8fbe] shrink-0" />
      <Palette size={16} strokeWidth={1} className="ml-[8px] text-[#8ea7cc] shrink-0" />
      <ChevronDown size={9} className="ml-[2px] text-[#8ea7cc] shrink-0" />
      <ChevronDown size={10} className="ml-[14px] shrink-0" />
      <span className="ml-[150px] w-[183px] text-center whitespace-nowrap relative shrink-0">CompPlex.docx • Salvo neste PC ˅</span>
      <div className="ml-[122px] w-[366px] h-[22px] bg-[#a7bcd6] flex items-center pl-[17px] gap-[15px] text-[#31568f] relative shrink-0">
        <Search size={16} className="-scale-x-100" strokeWidth={1.2} />
        Pesquisar (Alt+G)
      </div>
      <span className="ml-[396px] w-[100px] whitespace-nowrap relative shrink-0">Claudio Bielenki Jr</span>
      <div className="ml-[7px] w-[25px] h-[25px] rounded-full bg-[radial-gradient(circle_at_50%_40%,#c9a98c_0_5px,#3a4a44_6px,#8fa28c_100%)] relative shrink-0" />
      <Pen size={16} strokeWidth={1} className="ml-[25px] relative shrink-0" />
      <Share size={14} strokeWidth={1} className="ml-[39px] relative shrink-0" />
      <Minus size={13} strokeWidth={1} className="ml-[31px] relative shrink-0" />
      <Square size={12} strokeWidth={1} className="ml-[32px] relative shrink-0" />
      <X size={15} strokeWidth={1} className="ml-[31px] relative shrink-0" />
    </div>
    <div className="h-[126px] bg-[#f3f2f1] flex flex-col shadow-[0_2px_3px_rgba(0,0,0,.18)] relative shrink-0">
      <div className="h-[32px] flex items-center text-[13px] text-[#444] shrink-0">
        {tabs.map(([t, c]) => (
          <div key={t} className={c + " h-full flex items-center relative shrink-0"}>
            <span className={t === "Página Inicial" ? "font-medium text-[#222] border-b-[3px] border-[#2b579a] leading-[23px] h-[26px] mt-[3px]" : ""}>{t}</span>
          </div>
        ))}
        <div className="ml-auto w-[110px] h-[23px] bg-white border border-[#e1dfdd] rounded-[2px] flex items-center justify-center gap-[3px] text-[#2b579a] shrink-0"><MessageSquare size={12} />Comentários</div>
        <div className="ml-[9px] mr-[12px] w-[113px] h-[23px] bg-white border border-[#e1dfdd] rounded-[2px] flex items-center justify-center gap-[3px] text-[#2b579a] shrink-0"><Share size={12} />Compartilhar</div>
      </div>
      <Ribbon />
    </div>
    <Doc />
    <WordStatus />
    <WordTaskbar />
  </div>
);

export default function App() {
  return (
    <div className="flex w-[3840px] h-[1080px] overflow-hidden [font-family:Roboto,sans-serif]">
      <QgisWindow />
      <WordWindow />
    </div>
  );
}
